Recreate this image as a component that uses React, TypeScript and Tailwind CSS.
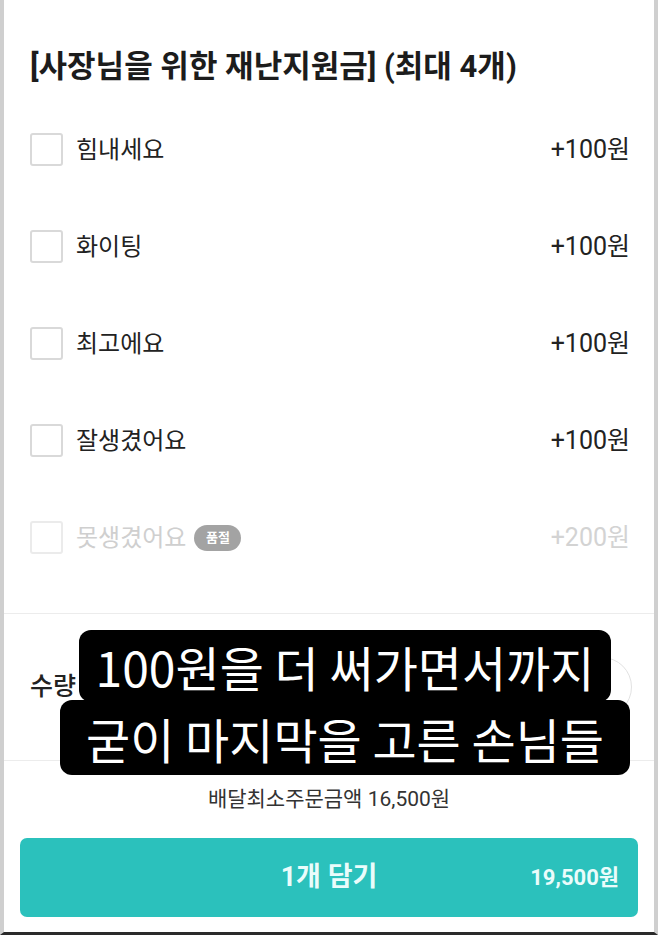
import React from 'react';

type Option = { label: string; price: string; soldOut?: boolean };

const options: Option[] = [
  { label: '힘내세요', price: '+100원' },
  { label: '화이팅', price: '+100원' },
  { label: '최고에요', price: '+100원' },
  { label: '잘생겼어요', price: '+100원' },
  { label: '못생겼어요', price: '+200원', soldOut: true },
];

const kr = "font-['Roboto','Noto_Sans_CJK_KR',sans-serif]";

const OptionRow: React.FC<{ option: Option }> = ({ option }) => {
  const dim = option.soldOut;
  return (
    <div className="flex h-[97px] items-center">
      <div
        className={`h-[33px] w-[33px] rounded-[3px] border-2 ${
          dim ? 'border-[#ebebeb]' : 'border-[#d9d9d9]'
        }`}
      />
      <span className={`ml-[13px] text-[24px] ${dim ? 'text-[#cfcfcf]' : 'text-[#222]'}`}>
        {option.label}
      </span>
      {dim && (
        <span className="ml-[8px] flex h-[26px] w-[47px] items-center justify-center rounded-full bg-[#a3a3a3] text-[13px] font-bold text-white">
          품절
        </span>
      )}
      <span className={`ml-auto text-[25px] ${dim ? 'text-[#d3d3d3]' : 'text-[#222]'}`}>
        {option.price}
      </span>
    </div>
  );
};

export default function App() {
  return (
    <div
      className={`relative flex h-[935px] w-[658px] flex-col overflow-hidden border-x-[4px] border-b-[3px] border-x-[#cfcfcf] border-b-[#2a2a2a] bg-white ${kr}`}
    >
      <div className="pl-[26px] pr-[24px] pt-[48px]">
        <h1 className="text-[31px] font-bold leading-[38px] text-[#1c1c1c]">
          [사장님을 위한 재난지원금] (최대 4개)
        </h1>
        <div className="mt-[15px] pb-[27px]">
          {options.map((o) => (
            <OptionRow key={o.label} option={o} />
          ))}
        </div>
      </div>

      <div className="flex h-[148px] items-center border-y border-[#ececec] pl-[26px] pr-[22px]">
        <span className="text-[25px] font-medium text-[#222]">수량</span>
        <div className="ml-auto flex h-[60px] w-[190px] items-center justify-between rounded-full border border-[#e2e2e2] pl-[20px] pr-[40px] text-[22px] text-[#222]">
          <span>−</span>
          <span>1</span>
          <span>+</span>
        </div>
      </div>

      <div className="flex h-[77px] items-center justify-center text-[21px] text-[#333]">
        배달최소주문금액 16,500원
      </div>

      <div className="px-[16px]">
        <button className="grid h-[79px] w-full grid-cols-[1fr_auto_1fr] items-center rounded-[7px] bg-[#2bc1bc] px-[19px] text-[#eafcfb]">
          <span />
          <span className="text-[27px] font-bold">1개 담기</span>
          <span className="text-right text-[22px] font-bold">19,500원</span>
        </button>
      </div>

      <div className="absolute left-[56px] top-[630px] flex w-[570px] flex-col items-center font-['Noto_Sans_CJK_KR',sans-serif] text-white">
        <div className="flex h-[72px] w-[532px] items-center justify-center rounded-[12px] bg-black text-[48px] font-normal leading-none">
          100원을 더 써가면서까지
        </div>
        <div className="-mt-[2px] flex h-[75px] w-full items-center justify-center rounded-[12px] bg-black text-[48px] font-normal leading-none">
          굳이 마지막을 고른 손님들
        </div>
      </div>
    </div>
  );
}
